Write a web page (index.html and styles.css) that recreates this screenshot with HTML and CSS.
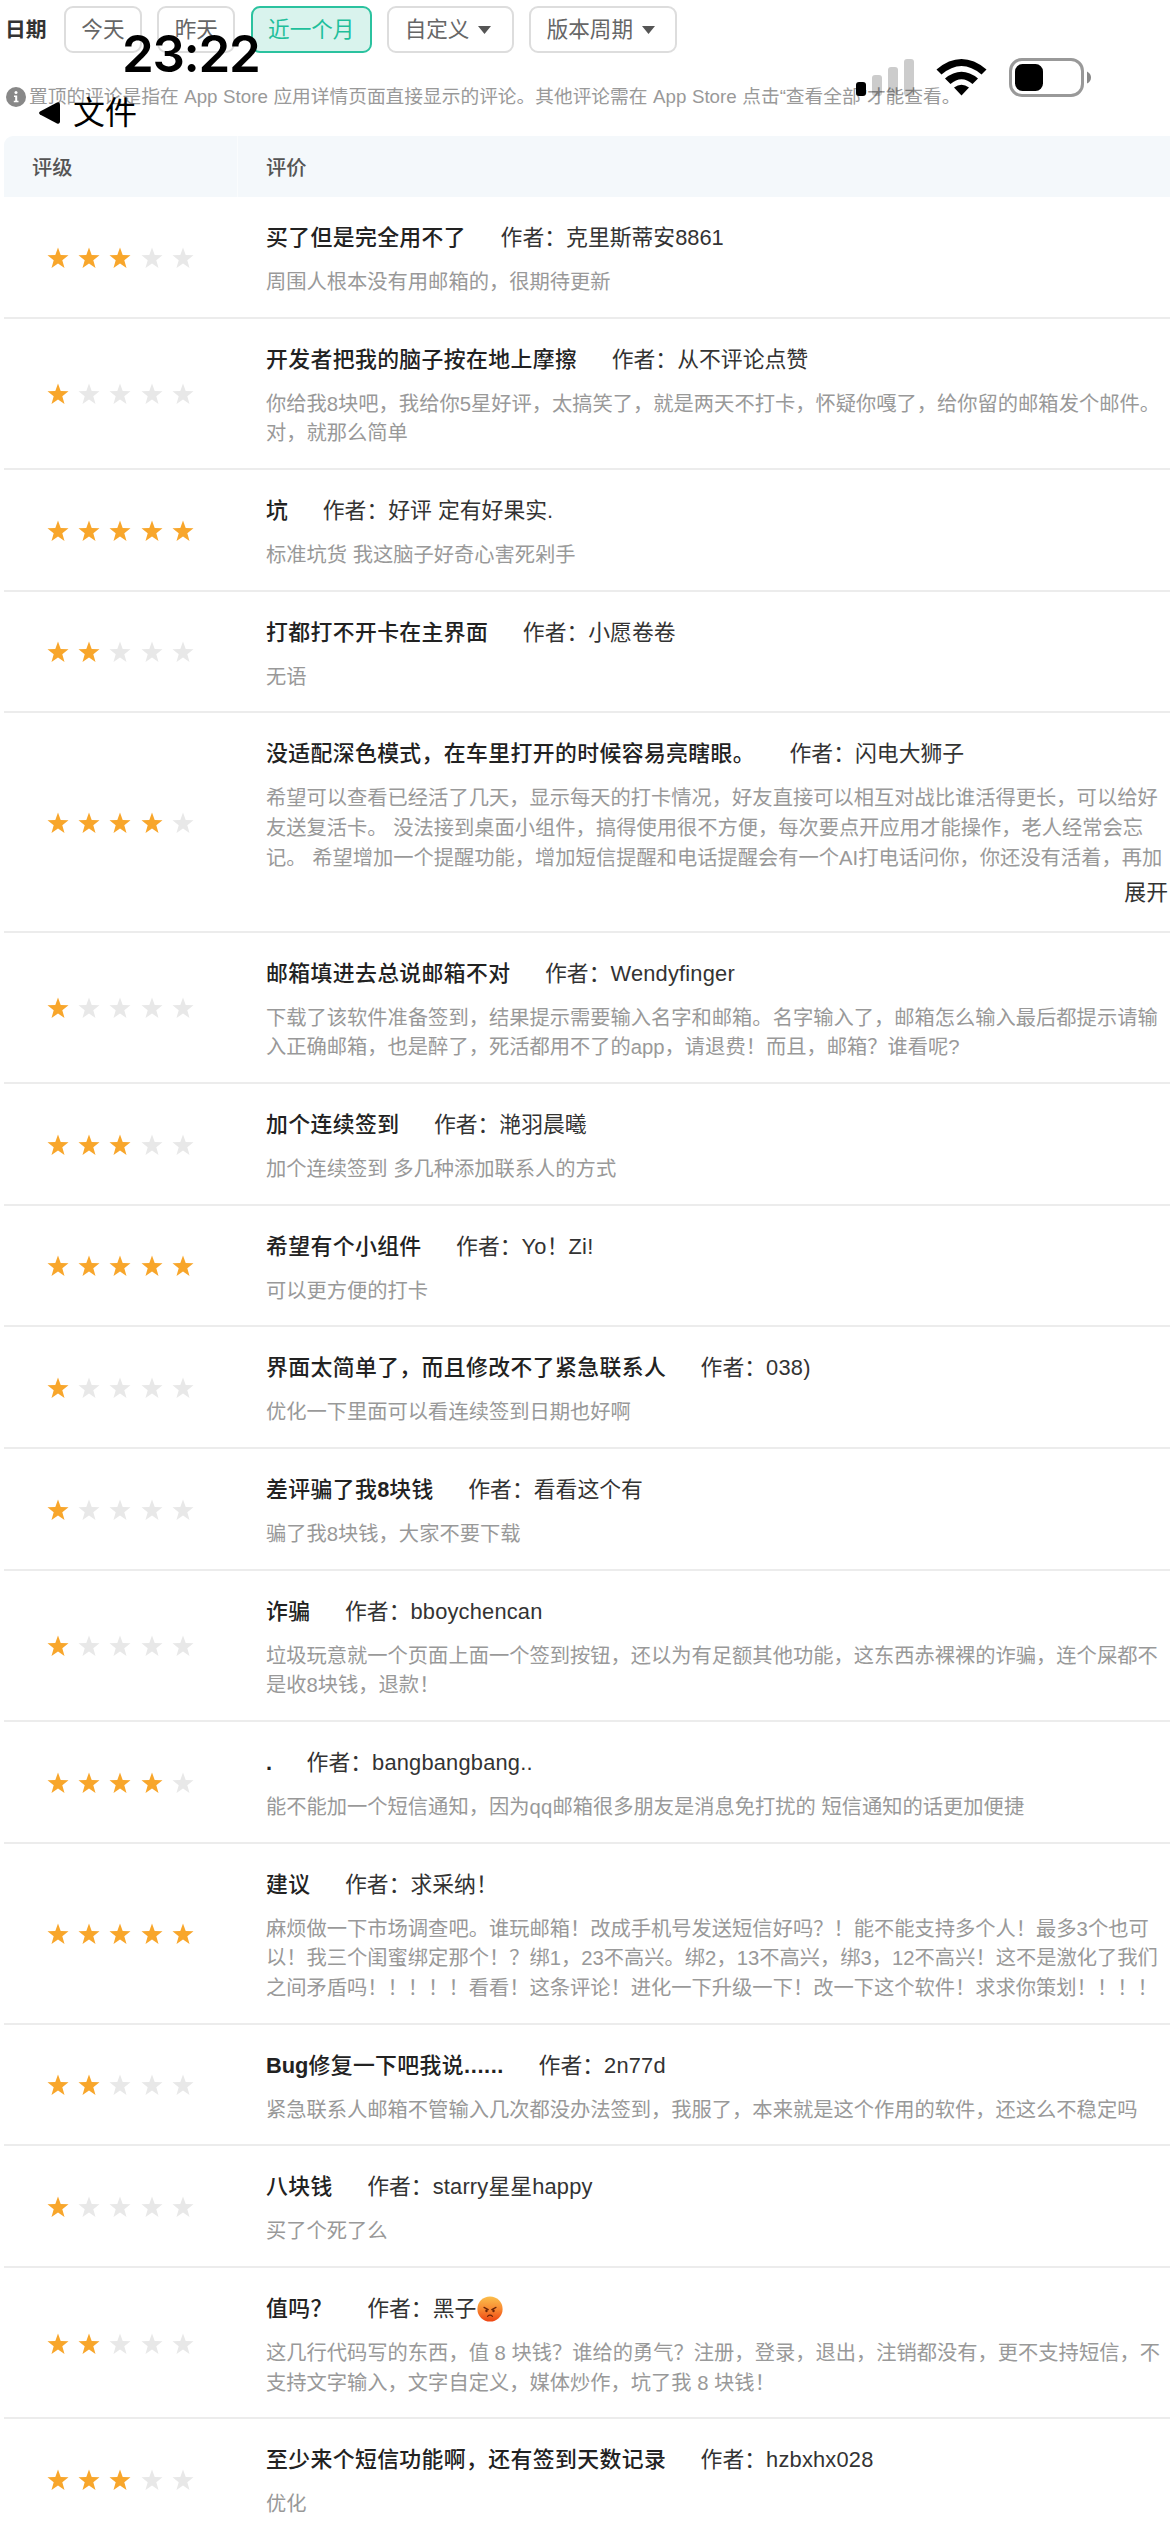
FILE: index.html
```html
<!DOCTYPE html>
<html lang="zh-CN">
<head>
<meta charset="utf-8">
<title>评论</title>
<link rel="stylesheet" href="styles.css">
</head>
<body>
<svg class="defs" width="0" height="0" aria-hidden="true">
  <symbol id="star" viewBox="0 0 22 22"><path d="M11 0.4 13.7 8 21.500 8.300 15.300 13.200 17.500 21 11 16.500 4.500 21 6.700 13.200 0.500 8.300 8.300 8z"/></symbol>
</svg>
<main class="page">
  <nav class="filters">
    <span class="label">日期</span>
    <button class="chip">今天</button>
    <button class="chip">昨天</button>
    <button class="chip active">近一个月</button>
    <button class="chip drop">自定义<svg class="caret" viewBox="0 0 13 8"><path d="M0 0h13L6.5 8z"/></svg></button>
    <button class="chip drop">版本周期<svg class="caret" viewBox="0 0 13 8"><path d="M0 0h13L6.5 8z"/></svg></button>
  </nav>
  <p class="notice"><svg class="info" viewBox="0 0 20 20"><circle cx="10" cy="10" r="10" fill="#888"/><circle cx="10" cy="5.600" r="1.500" fill="#fff"/><path d="M8 8.500h3.200v5.300h1.300v1.500H7.800v-1.500h1.400V10H8z" fill="#fff"/></svg><span>置顶的评论是指在 App Store 应用详情页面直接显示的评论。其他评论需在 App Store 点击“查看全部”才能查看。</span></p>
  <section class="reviews">
    <header class="head"><div>评级</div><div>评价</div></header>

    <article class="row"><div class="stars s3"><svg><use href="#star"/></svg><svg><use href="#star"/></svg><svg><use href="#star"/></svg><svg><use href="#star"/></svg><svg><use href="#star"/></svg></div>
      <div class="body"><h3><b>买了但是完全用不了</b><span>作者：克里斯蒂安8861</span></h3><p>周围人根本没有用邮箱的，很期待更新</p></div></article>

    <article class="row"><div class="stars s1"><svg><use href="#star"/></svg><svg><use href="#star"/></svg><svg><use href="#star"/></svg><svg><use href="#star"/></svg><svg><use href="#star"/></svg></div>
      <div class="body"><h3><b>开发者把我的脑子按在地上摩擦</b><span>作者：从不评论点赞</span></h3><p>你给我8块吧，我给你5星好评，太搞笑了，就是两天不打卡，怀疑你嘎了，给你留的邮箱发个邮件。<br>对，就那么简单</p></div></article>

    <article class="row"><div class="stars s5"><svg><use href="#star"/></svg><svg><use href="#star"/></svg><svg><use href="#star"/></svg><svg><use href="#star"/></svg><svg><use href="#star"/></svg></div>
      <div class="body"><h3><b>坑</b><span>作者：好评 定有好果实.</span></h3><p>标准坑货 我这脑子好奇心害死剁手</p></div></article>

    <article class="row"><div class="stars s2"><svg><use href="#star"/></svg><svg><use href="#star"/></svg><svg><use href="#star"/></svg><svg><use href="#star"/></svg><svg><use href="#star"/></svg></div>
      <div class="body"><h3><b>打都打不开卡在主界面</b><span>作者：小愿卷卷</span></h3><p>无语</p></div></article>

    <article class="row"><div class="stars s4"><svg><use href="#star"/></svg><svg><use href="#star"/></svg><svg><use href="#star"/></svg><svg><use href="#star"/></svg><svg><use href="#star"/></svg></div>
      <div class="body"><h3><b>没适配深色模式，在车里打开的时候容易亮瞎眼。</b><span>作者：闪电大狮子</span></h3><p>希望可以查看已经活了几天，显示每天的打卡情况，好友直接可以相互对战比谁活得更长，可以给好<br>友送复活卡。 没法接到桌面小组件，搞得使用很不方便，每次要点开应用才能操作，老人经常会忘<br>记。 希望增加一个提醒功能，增加短信提醒和电话提醒会有一个AI打电话问你，你还没有活着，再加</p><a class="more">展开</a></div></article>

    <article class="row"><div class="stars s1"><svg><use href="#star"/></svg><svg><use href="#star"/></svg><svg><use href="#star"/></svg><svg><use href="#star"/></svg><svg><use href="#star"/></svg></div>
      <div class="body"><h3><b>邮箱填进去总说邮箱不对</b><span>作者：<i>Wendyfinger</i></span></h3><p>下载了该软件准备签到，结果提示需要输入名字和邮箱。名字输入了，邮箱怎么输入最后都提示请输<br>入正确邮箱，也是醉了，死活都用不了的app，请退费！而且，邮箱？谁看呢?</p></div></article>

    <article class="row"><div class="stars s3"><svg><use href="#star"/></svg><svg><use href="#star"/></svg><svg><use href="#star"/></svg><svg><use href="#star"/></svg><svg><use href="#star"/></svg></div>
      <div class="body"><h3><b>加个连续签到</b><span>作者：滟羽晨曦</span></h3><p>加个连续签到 多几种添加联系人的方式</p></div></article>

    <article class="row"><div class="stars s5"><svg><use href="#star"/></svg><svg><use href="#star"/></svg><svg><use href="#star"/></svg><svg><use href="#star"/></svg><svg><use href="#star"/></svg></div>
      <div class="body"><h3><b>希望有个小组件</b><span>作者：<i>Yo</i>！<i>Zi!</i></span></h3><p>可以更方便的打卡</p></div></article>

    <article class="row"><div class="stars s1"><svg><use href="#star"/></svg><svg><use href="#star"/></svg><svg><use href="#star"/></svg><svg><use href="#star"/></svg><svg><use href="#star"/></svg></div>
      <div class="body"><h3><b>界面太简单了，而且修改不了紧急联系人</b><span>作者：<i>038)</i></span></h3><p>优化一下里面可以看连续签到日期也好啊</p></div></article>

    <article class="row"><div class="stars s1"><svg><use href="#star"/></svg><svg><use href="#star"/></svg><svg><use href="#star"/></svg><svg><use href="#star"/></svg><svg><use href="#star"/></svg></div>
      <div class="body"><h3><b>差评骗了我<strong>8</strong>块钱</b><span>作者：看看这个有</span></h3><p>骗了我8块钱，大家不要下载</p></div></article>

    <article class="row"><div class="stars s1"><svg><use href="#star"/></svg><svg><use href="#star"/></svg><svg><use href="#star"/></svg><svg><use href="#star"/></svg><svg><use href="#star"/></svg></div>
      <div class="body"><h3><b>诈骗</b><span>作者：<i>bboychencan</i></span></h3><p>垃圾玩意就一个页面上面一个签到按钮，还以为有足额其他功能，这东西赤裸裸的诈骗，连个屎都不<br>是收8块钱，退款！</p></div></article>

    <article class="row"><div class="stars s4"><svg><use href="#star"/></svg><svg><use href="#star"/></svg><svg><use href="#star"/></svg><svg><use href="#star"/></svg><svg><use href="#star"/></svg></div>
      <div class="body"><h3><b><strong>.</strong></b><span>作者：<i>bangbangbang..</i></span></h3><p>能不能加一个短信通知，因为<i>qq</i>邮箱很多朋友是消息免打扰的 短信通知的话更加便捷</p></div></article>

    <article class="row"><div class="stars s5"><svg><use href="#star"/></svg><svg><use href="#star"/></svg><svg><use href="#star"/></svg><svg><use href="#star"/></svg><svg><use href="#star"/></svg></div>
      <div class="body"><h3><b>建议</b><span>作者：求采纳！</span></h3><p>麻烦做一下市场调查吧。谁玩邮箱！改成手机号发送短信好吗？！能不能支持多个人！最多3个也可<br>以！我三个闺蜜绑定那个！？绑1，23不高兴。绑2，13不高兴，绑3，12不高兴！这不是激化了我们<br>之间矛盾吗！！！！！看看！这条评论！进化一下升级一下！改一下这个软件！求求你策划！！！！</p></div></article>

    <article class="row"><div class="stars s2"><svg><use href="#star"/></svg><svg><use href="#star"/></svg><svg><use href="#star"/></svg><svg><use href="#star"/></svg><svg><use href="#star"/></svg></div>
      <div class="body"><h3><b><strong>Bug</strong>修复一下吧我说<strong class="dots">......</strong></b><span>作者：<i>2n77d</i></span></h3><p>紧急联系人邮箱不管输入几次都没办法签到，我服了，本来就是这个作用的软件，还这么不稳定吗</p></div></article>

    <article class="row"><div class="stars s1"><svg><use href="#star"/></svg><svg><use href="#star"/></svg><svg><use href="#star"/></svg><svg><use href="#star"/></svg><svg><use href="#star"/></svg></div>
      <div class="body"><h3><b>八块钱</b><span>作者：<i>starry</i>星星<i>happy</i></span></h3><p>买了个死了么</p></div></article>

    <article class="row"><div class="stars s2"><svg><use href="#star"/></svg><svg><use href="#star"/></svg><svg><use href="#star"/></svg><svg><use href="#star"/></svg><svg><use href="#star"/></svg></div>
      <div class="body"><h3><b>值吗？</b><span>作者：黑子</span><svg class="emoji" viewBox="0 0 26 26"><defs><linearGradient id="rage" x1="0" y1="0" x2="0" y2="1"><stop offset="0" stop-color="#fbbf4c"/><stop offset=".5" stop-color="#f88a32"/><stop offset="1" stop-color="#ee4412"/></linearGradient></defs><circle cx="13" cy="13" r="12.600" fill="url(#rage)"/><path d="M7 11.400 11.200 13.600M19 11.400 14.800 13.600M10.500 20.400Q13 18 15.500 20.400" fill="none" stroke="#6a2408" stroke-width="1.200" stroke-linecap="round"/><ellipse cx="9.500" cy="14.800" rx="1.200" ry="1.500" fill="#6a2408"/><ellipse cx="16.500" cy="14.800" rx="1.200" ry="1.500" fill="#6a2408"/></svg></h3><p>这几行代码写的东西，值 8 块钱？谁给的勇气？注册，登录，退出，注销都没有，更不支持短信，不<br>支持文字输入，文字自定义，媒体炒作，坑了我 8 块钱！</p></div></article>

    <article class="row"><div class="stars s3"><svg><use href="#star"/></svg><svg><use href="#star"/></svg><svg><use href="#star"/></svg><svg><use href="#star"/></svg><svg><use href="#star"/></svg></div>
      <div class="body"><h3><b>至少来个短信功能啊，还有签到天数记录</b><span>作者：<i>hzbxhx028</i></span></h3><p>优化</p></div></article>
  </section>
</main>

<div class="clock">23:22</div>
<div class="back"><svg viewBox="0 0 21 22"><path d="M1 9.600 18 .6Q21 -.4 21 2.400V19.600Q21 22.400 18 21.400L1 12.400Q-.8 11 1 9.600z"/></svg>文件</div>
<svg class="system" viewBox="0 0 240 44">
  <rect x="0" y="24" width="10" height="14" rx="3"/>
  <g fill="#000" fill-opacity=".2"><rect x="16" y="17" width="10" height="21" rx="3"/><rect x="32" y="9" width="10" height="29" rx="3"/><rect x="48" y="1" width="10" height="37" rx="3"/></g>
  <path d="M80.500 11.500Q105.500 -9.300 130.500 11.500L125.500 16.600Q105.500 -.4 85.500 16.600zM89 20.500Q105.500 7.100 122 20.500L116.500 25.900Q105.500 16.500 94.500 25.900zM98 29.400Q105.500 24 113 29.400L105.500 37.600z"/>
  <rect x="154.500" y="1.500" width="72" height="36" rx="11.500" fill="none" stroke="#999" stroke-width="3"/>
  <rect x="159" y="6" width="28" height="27" rx="7.500"/>
  <path d="M231 13.500Q235 15.500 235 19.500T231 25.500z" fill="#888"/>
</svg>
</body>
</html>
```
FILE: styles.css
```css
* { box-sizing: border-box; }
body {
  margin: 0;
  width: 1170px;
  height: 2532px;
  overflow: hidden;
  position: relative;
  background: #fff;
  font-family: "Liberation Sans", "Noto Sans CJK SC", sans-serif;
  color: #333;
}
.defs { position: absolute; }
.page { padding: 6px 0 0 4px; }

.filters { display: flex; align-items: center; height: 47px; }
.label { width: 44px; margin: 0 15px 0 1px; font-size: 20.800px; font-weight: 600; line-height: 43px; color: #333; white-space: nowrap; }
.chip {
  height: 47px;
  margin: 0 15.600px 0 0;
  padding: 1px 15.300px 0;
  border: 2px solid #ddd;
  border-radius: 9px;
  background: #fff;
  color: #666;
  font: inherit;
  font-size: 21.600px;
  line-height: 42px;
  display: flex;
  align-items: center;
  white-space: nowrap;
}
.chip.active { background: #d9f3ed; border-color: #2bc29f; color: #1fbf9b; }
.caret { width: 13px; height: 8px; margin: 0 5.500px 0 8.500px; fill: #555; }

.notice { display: flex; align-items: center; height: 30px; margin: 29px 0 24px 2px; font-size: 18.720px; color: #999; white-space: nowrap; }
.notice span { word-spacing: .4px; line-height: 28px; padding-bottom: 1px; }
.info { width: 20px; height: 20px; margin-right: 3px; }

.head, .row { display: grid; grid-template-columns: 234px 1fr; }
.head {
  height: 61px;
  background: #f4f8fb;
  border-radius: 9px 0 0 0;
  font-size: 20.280px;
  font-weight: 500;
  color: #555;
  line-height: 64px;
}
.head div { padding-left: 28px; height: 61px; }
.head div:first-child { border-right: 1px solid #fafcfd; }

.row { border-bottom: 2px solid #ececec; }
.stars { display: flex; align-items: center; gap: 9.200px; padding: 2px 0 0 43px; }
.stars svg { width: 22px; height: 22px; fill: #e8e8e8; }
.s1 svg:nth-child(-n+1), .s2 svg:nth-child(-n+2), .s3 svg:nth-child(-n+3),
.s4 svg:nth-child(-n+4), .s5 svg { fill: #f8a62b; }

.body { padding: 19px 2px 19px 28px; white-space: nowrap; }
h3 { display: flex; align-items: center; height: 44px; margin: 0 0 8.040px; font-size: 21.840px; font-weight: 400; line-height: 44px; }
h3 b { font-weight: 500; margin-right: 34.500px; letter-spacing: .4px; color: #222; }
h3 strong { font-weight: 700; letter-spacing: 0; }
h3 .dots { letter-spacing: .6px; }
i { font-style: normal; letter-spacing: .2px; }
.body p { margin: 0; font-size: 20.280px; line-height: 29.640px; color: #999; }
.more { display: block; height: 38.300px; padding-top: 2px; text-align: right; font-size: 21.840px; line-height: 36px; color: #333; }
.emoji { width: 26px; height: 26px; margin-left: 1px; }

.clock { position: absolute; left: 122px; top: 23px; font: 600 51px/62px Inter, sans-serif; letter-spacing: -1.300px; color: #000; white-space: nowrap; }
.back { position: absolute; left: 39px; top: 91px; display: flex; align-items: center; gap: 13px; font-size: 32px; line-height: 44px; color: #000; white-space: nowrap; }
.back svg { width: 21px; height: 22px; }
.system { position: absolute; left: 856px; top: 58px; width: 240px; height: 44px; }
```
